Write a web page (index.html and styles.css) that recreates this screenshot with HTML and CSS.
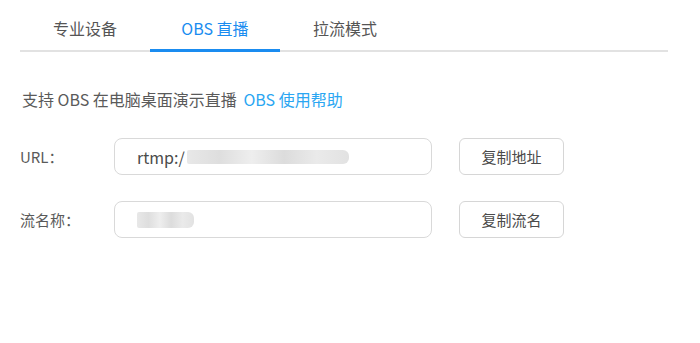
FILE: index.html
```html
<!DOCTYPE html>
<html lang="zh-CN">
<head>
    <meta charset="UTF-8">
    <meta name="viewport" content="width=device-width, initial-scale=1.0">
    <title>OBS 直播</title>
    <link rel="stylesheet" href="styles.css">
</head>
<body>
    <div class="panel">
        <div class="tabs">
            <div class="tab">专业设备</div>
            <div class="tab active">OBS 直播</div>
            <div class="tab">拉流模式</div>
        </div>
        <p class="intro">支持 OBS 在电脑桌面演示直播 <a class="help" href="#">OBS 使用帮助</a></p>
        <div class="row">
            <label class="row-label">URL：</label>
            <div class="field">
                <span>rtmp:/</span><span class="mask mask-url"></span>
            </div>
            <button class="copy">复制地址</button>
        </div>
        <div class="row">
            <label class="row-label">流名称：</label>
            <div class="field">
                <span class="mask mask-key"></span>
            </div>
            <button class="copy">复制流名</button>
        </div>
    </div>
</body>
</html>
```

FILE: styles.css
```css
body {
    margin: 0;
    background: #fff;
    font-family: "PingFang SC", "Noto Sans CJK SC", sans-serif;
    color: #555;
}
.panel {
    padding: 0 32px 0 20px;
}
.tabs {
    display: flex;
    height: 50px;
    border-bottom: 2px solid #e2e2e2;
}
.tab {
    width: 130px;
    box-sizing: border-box;
    height: 52px;
    padding-top: 6px;
    text-align: center;
    font-size: 16px;
    line-height: 44px;
    color: #555;
}
.tab.active {
    color: #1a8cf0;
    border-bottom: 3px solid #1a8cf0;
}
.intro {
    margin: 35px 0 0 2px;
    font-size: 16px;
    line-height: 24px;
    color: #5a5a5a;
}
.help {
    color: #2aa6f2;
    text-decoration: none;
    margin-left: 3px;
}
.row {
    display: flex;
    align-items: center;
    margin-top: 27px;
    height: 37px;
}
.row + .row {
    margin-top: 26px;
}
.row-label {
    width: 94px;
    font-size: 15px;
    color: #5a5a5a;
}
.field {
    width: 318px;
    height: 37px;
    box-sizing: border-box;
    border: 1px solid #d9d9d9;
    border-radius: 8px;
    padding: 0 22px;
    display: flex;
    align-items: center;
    font-size: 16px;
    color: #4a4a4a;
}
.mask {
    display: inline-block;
    height: 14px;
    background: linear-gradient(90deg, #e8e8e8, #dedede 20%, #eeeeee 40%, #dcdcdc 60%, #eaeaea 80%, #e2e2e2);
    border-radius: 2px 6px 6px 2px;
}
.mask-url {
    width: 162px;
    margin-left: 2px;
}
.mask-key {
    width: 57px;
    height: 16px;
}
.copy {
    margin-left: 27px;
    width: 105px;
    height: 37px;
    background: #fff;
    border: 1px solid #d6d6d6;
    border-radius: 6px;
    font-family: inherit;
    font-size: 15px;
    color: #4a4a4a;
    cursor: pointer;
}
```
